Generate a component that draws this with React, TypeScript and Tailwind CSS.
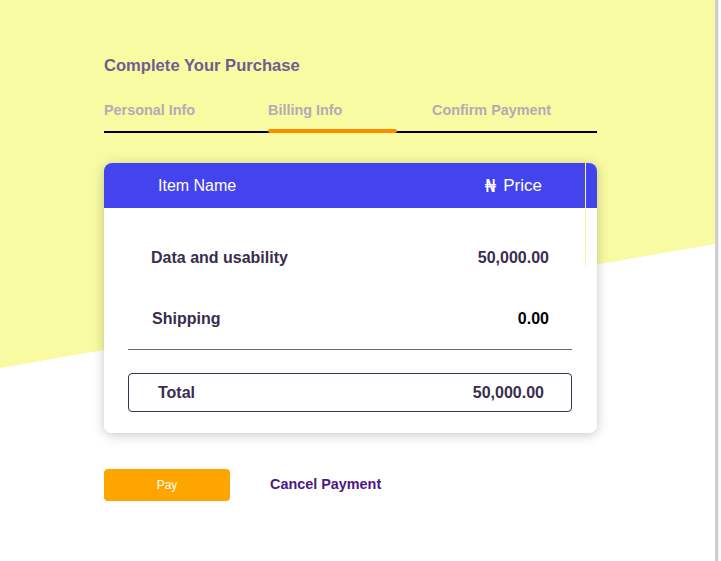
const tabs = ['Personal Info', 'Billing Info', 'Confirm Payment'];

export default function App() {
  return (
    <div className="flex min-h-[561px] w-full bg-white font-['Liberation_Sans',Arial,sans-serif]">
      <div className="relative w-[715px] shrink-0">
        <div className="absolute inset-0 bg-[#f8fba2] [clip-path:polygon(0_0,100%_0,100%_244px,0_368px)]" />

        <div className="relative pl-[104px] pt-[56px] pr-[118px]">
          <h1 className="text-[16.6px] font-bold leading-5 text-[#735b92]">Complete Your Purchase</h1>

          <div className="mt-[24px] flex">
            {tabs.map((t) => (
              <div key={t} className="w-[164px] text-[14.4px] font-bold leading-5 text-[#b5aab5]">
                {t}
              </div>
            ))}
          </div>
          <div className="relative mt-[11px] h-[2px] bg-black">
            <div className="absolute left-[164px] top-[-2px] h-[4px] w-[129px] rounded-full bg-[#ff8c00]" />
          </div>

          <div className="mt-[30px] flex gap-px rounded-lg shadow-[0_2px_12px_rgba(0,0,0,0.22)]">
            <div className="w-[481px] overflow-hidden rounded-l-lg bg-white">
              <div className="flex h-[45px] items-center justify-between bg-[#4444ee] pl-[54px] pr-[43px] text-base text-white">
                <span>Item Name</span>
                <span className="flex items-center">
                  <span className="font-['DejaVu_Sans',sans-serif] text-[18px] leading-none">₦</span>
                  <span className="ml-[7px] text-[17px]">Price</span>
                </span>
              </div>
              <div className="pt-[19px]">
                <div className="flex h-[61px] items-center justify-between pl-[47px] pr-[36px] text-base font-bold text-[#3a2d4d]">
                  <span>Data and usability</span>
                  <span>50,000.00</span>
                </div>
                <div className="flex h-[61px] items-center justify-between pl-[48px] pr-[36px] text-base font-bold text-[#3a2d4d]">
                  <span>Shipping</span>
                  <span className="text-black">0.00</span>
                </div>
                <div className="ml-[24px] mr-[13px] h-px bg-[#6b6676]" />
                <div className="mb-[21px] ml-[24px] mr-[13px] mt-[23px] flex h-[39px] items-center justify-between rounded border border-[#3b3050] pl-[29px] pr-[27px] text-base font-bold text-[#3a2d4d]">
                  <span>Total</span>
                  <span>50,000.00</span>
                </div>
              </div>
            </div>
            <div className="flex-1 overflow-hidden rounded-r-lg bg-white">
              <div className="h-[45px] bg-[#4444ee]" />
            </div>
          </div>

          <div className="mt-[36px] flex items-center">
            <button className="h-[32px] w-[126px] rounded bg-[#ffa500] text-[12px] text-white">Pay</button>
            <button className="ml-[40px] text-[14.4px] font-bold text-[#4c1784]">Cancel Payment</button>
          </div>
        </div>
      </div>
      <div className="w-[3px] shrink-0 bg-[#cdcdcd]" />
      <div className="w-px shrink-0 bg-[#ececec]" />
      <div className="flex-1 bg-white" />
    </div>
  );
}
